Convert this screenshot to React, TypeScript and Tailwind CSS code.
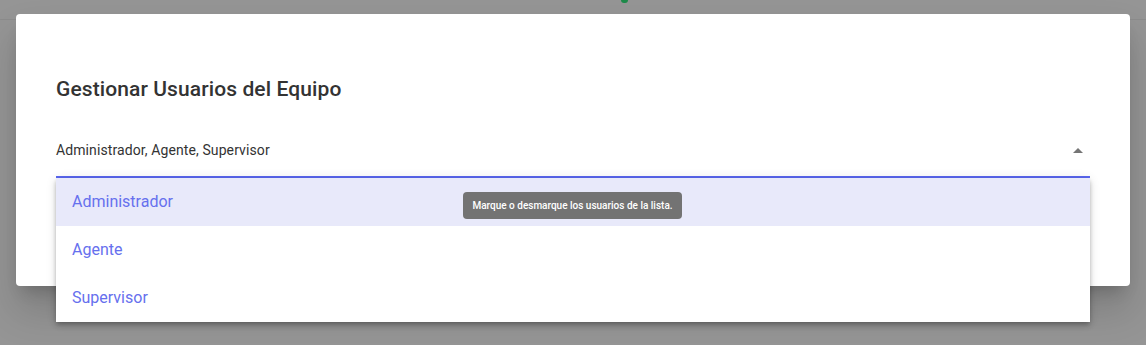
import { useState } from 'react';

const OPTIONS = ['Administrador', 'Agente', 'Supervisor'];

export default function App() {
  const [hovered] = useState('Administrador');

  return (
    <div className="relative h-[345px] w-full overflow-hidden bg-[#959595] font-['Roboto',sans-serif]">
      {/* Page header behind the overlay */}
      <div className="h-[20px] border-b border-[#8c8c8c]">
        <div className="ml-[621px] h-[3px] w-[7px] rounded-b-full bg-[#1e8a4a]" />
      </div>

      {/* Dialog */}
      <div className="absolute left-[16px] top-[14px] h-[272px] w-[1114px] rounded-[4px] bg-white px-[40px] pt-[63px] shadow-[0_11px_15px_-7px_rgba(0,0,0,0.2),0_24px_38px_3px_rgba(0,0,0,0.14)]">
        <h2 className="text-[21px] leading-[24px] font-medium tracking-[0.1px] text-[#333333]">Gestionar Usuarios del Equipo</h2>

        <div className="relative mt-[39px]">
          <div className="flex items-center justify-between border-b-2 border-[#5a67f0] pb-[16px]">
            <span className="text-[14px] leading-[20px] tracking-[0.1px] text-[#333333]">Administrador, Agente, Supervisor</span>
            <svg width="10" height="5" viewBox="0 0 10 5" className="mr-[7px]">
              <path d="M0 5 L5 0 L10 5 Z" fill="#757575" />
            </svg>
          </div>

          {/* Dropdown menu */}
          <div className="absolute left-0 right-0 top-[38px] z-10 bg-white shadow-[0_2px_4px_-1px_rgba(0,0,0,0.2),0_4px_5px_0_rgba(0,0,0,0.14),0_1px_10px_0_rgba(0,0,0,0.12)]">
            {OPTIONS.map((o) => (
              <div
                key={o}
                className={
                  'flex h-[48px] items-center px-[16px] text-[16px] text-[#6670ee] ' +
                  (o === hovered ? 'bg-[#e8e9fa]' : 'bg-white')
                }
              >
                {o}
              </div>
            ))}

            {/* Tooltip */}
            <div className="absolute left-[407px] top-[14px] flex h-[27px] w-[219px] items-center justify-center rounded-[4px] bg-[#737373] text-[10px] font-medium text-white">
              Marque o desmarque los usuarios de la lista.
            </div>
          </div>
        </div>
      </div>
    </div>
  );
}
